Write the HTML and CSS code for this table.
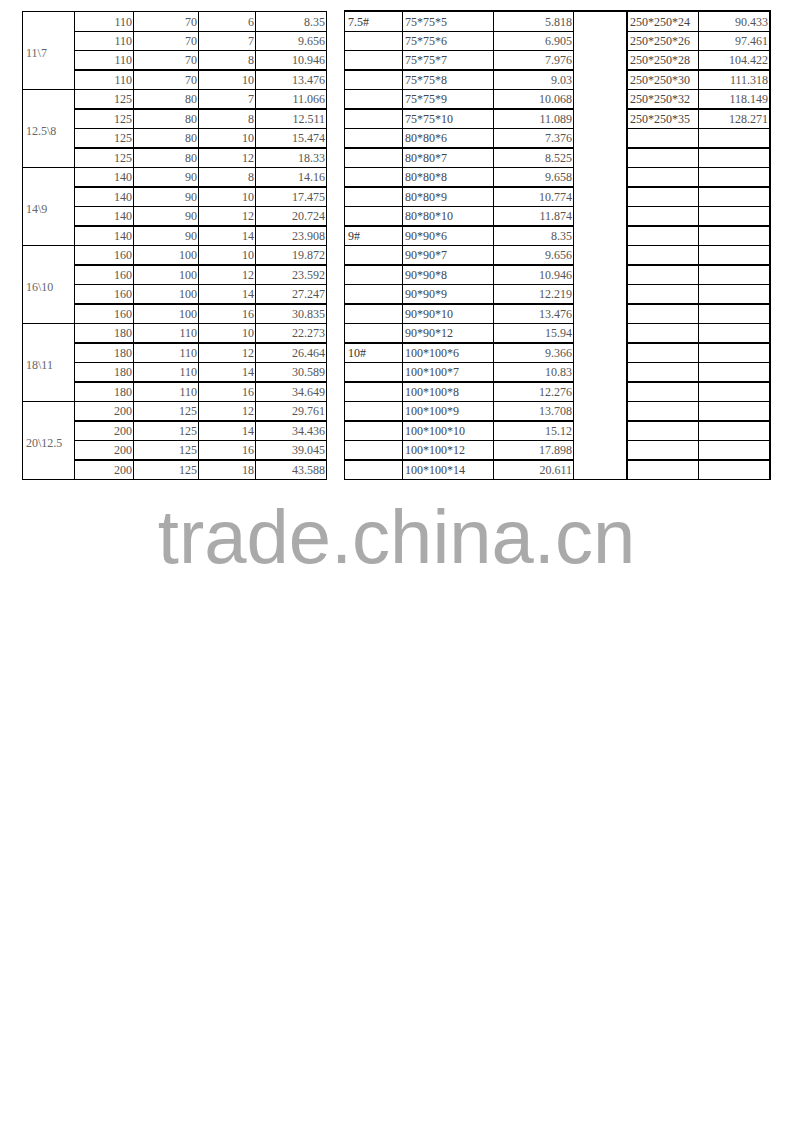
FILE: index.html
```html
<!DOCTYPE html>
<html>
<head>
<meta charset="utf-8">
<link rel="stylesheet" href="styles.css">
</head>
<body>
<div class="sheet">
  <table class="tbl left">
    <colgroup><col class="c1"><col class="c2"><col class="c3"><col class="c4"><col class="c5"></colgroup>
    <tr><td class="grp" rowspan="4">11\7</td><td class="r">110</td><td class="r">70</td><td class="r">6</td><td class="r">8.35</td></tr>
    <tr><td class="r">110</td><td class="r">70</td><td class="r">7</td><td class="r">9.656</td></tr>
    <tr class="thick"><td class="r">110</td><td class="r">70</td><td class="r">8</td><td class="r">10.946</td></tr>
    <tr><td class="r">110</td><td class="r">70</td><td class="r">10</td><td class="r">13.476</td></tr>
    <tr class="thick"><td class="grp" rowspan="4">12.5\8</td><td class="r">125</td><td class="r">80</td><td class="r">7</td><td class="r">11.066</td></tr>
    <tr><td class="r">125</td><td class="r">80</td><td class="r">8</td><td class="r">12.511</td></tr>
    <tr class="thick"><td class="r">125</td><td class="r">80</td><td class="r">10</td><td class="r">15.474</td></tr>
    <tr><td class="r">125</td><td class="r">80</td><td class="r">12</td><td class="r">18.33</td></tr>
    <tr class="thick"><td class="grp" rowspan="4">14\9</td><td class="r">140</td><td class="r">90</td><td class="r">8</td><td class="r">14.16</td></tr>
    <tr><td class="r">140</td><td class="r">90</td><td class="r">10</td><td class="r">17.475</td></tr>
    <tr class="thick"><td class="r">140</td><td class="r">90</td><td class="r">12</td><td class="r">20.724</td></tr>
    <tr><td class="r">140</td><td class="r">90</td><td class="r">14</td><td class="r">23.908</td></tr>
    <tr class="thick"><td class="grp" rowspan="4">16\10</td><td class="r">160</td><td class="r">100</td><td class="r">10</td><td class="r">19.872</td></tr>
    <tr><td class="r">160</td><td class="r">100</td><td class="r">12</td><td class="r">23.592</td></tr>
    <tr class="thick"><td class="r">160</td><td class="r">100</td><td class="r">14</td><td class="r">27.247</td></tr>
    <tr><td class="r">160</td><td class="r">100</td><td class="r">16</td><td class="r">30.835</td></tr>
    <tr class="thick"><td class="grp" rowspan="4">18\11</td><td class="r">180</td><td class="r">110</td><td class="r">10</td><td class="r">22.273</td></tr>
    <tr><td class="r">180</td><td class="r">110</td><td class="r">12</td><td class="r">26.464</td></tr>
    <tr class="thick"><td class="r">180</td><td class="r">110</td><td class="r">14</td><td class="r">30.589</td></tr>
    <tr><td class="r">180</td><td class="r">110</td><td class="r">16</td><td class="r">34.649</td></tr>
    <tr class="thick"><td class="grp" rowspan="4">20\12.5</td><td class="r">200</td><td class="r">125</td><td class="r">12</td><td class="r">29.761</td></tr>
    <tr><td class="r">200</td><td class="r">125</td><td class="r">14</td><td class="r">34.436</td></tr>
    <tr class="thick"><td class="r">200</td><td class="r">125</td><td class="r">16</td><td class="r">39.045</td></tr>
    <tr><td class="r">200</td><td class="r">125</td><td class="r">18</td><td class="r">43.588</td></tr>
  </table>

  <table class="tbl right">
    <colgroup><col class="d1"><col class="d2"><col class="d3"><col class="d4"><col class="d5"><col class="d6"></colgroup>
    <tr><td class="lab">7.5#</td><td class="sz">75*75*5</td><td class="r">5.818</td><td class="gap"></td><td class="sz">250*250*24</td><td class="r">90.433</td></tr>
    <tr><td></td><td class="sz">75*75*6</td><td class="r">6.905</td><td class="gap"></td><td class="sz">250*250*26</td><td class="r">97.461</td></tr>
    <tr class="thick"><td></td><td class="sz">75*75*7</td><td class="r">7.976</td><td class="gap"></td><td class="sz">250*250*28</td><td class="r">104.422</td></tr>
    <tr><td></td><td class="sz">75*75*8</td><td class="r">9.03</td><td class="gap"></td><td class="sz">250*250*30</td><td class="r">111.318</td></tr>
    <tr class="thick"><td></td><td class="sz">75*75*9</td><td class="r">10.068</td><td class="gap"></td><td class="sz">250*250*32</td><td class="r">118.149</td></tr>
    <tr><td></td><td class="sz">75*75*10</td><td class="r">11.089</td><td class="gap"></td><td class="sz">250*250*35</td><td class="r">128.271</td></tr>
    <tr class="thick"><td></td><td class="sz">80*80*6</td><td class="r">7.376</td><td class="gap"></td><td></td><td></td></tr>
    <tr><td></td><td class="sz">80*80*7</td><td class="r">8.525</td><td class="gap"></td><td></td><td></td></tr>
    <tr class="thick"><td></td><td class="sz">80*80*8</td><td class="r">9.658</td><td class="gap"></td><td></td><td></td></tr>
    <tr><td></td><td class="sz">80*80*9</td><td class="r">10.774</td><td class="gap"></td><td></td><td></td></tr>
    <tr class="thick"><td></td><td class="sz">80*80*10</td><td class="r">11.874</td><td class="gap"></td><td></td><td></td></tr>
    <tr><td class="lab">9#</td><td class="sz">90*90*6</td><td class="r">8.35</td><td class="gap"></td><td></td><td></td></tr>
    <tr class="thick"><td></td><td class="sz">90*90*7</td><td class="r">9.656</td><td class="gap"></td><td></td><td></td></tr>
    <tr><td></td><td class="sz">90*90*8</td><td class="r">10.946</td><td class="gap"></td><td></td><td></td></tr>
    <tr class="thick"><td></td><td class="sz">90*90*9</td><td class="r">12.219</td><td class="gap"></td><td></td><td></td></tr>
    <tr><td></td><td class="sz">90*90*10</td><td class="r">13.476</td><td class="gap"></td><td></td><td></td></tr>
    <tr class="thick"><td></td><td class="sz">90*90*12</td><td class="r">15.94</td><td class="gap"></td><td></td><td></td></tr>
    <tr><td class="lab">10#</td><td class="sz">100*100*6</td><td class="r">9.366</td><td class="gap"></td><td></td><td></td></tr>
    <tr class="thick"><td></td><td class="sz">100*100*7</td><td class="r">10.83</td><td class="gap"></td><td></td><td></td></tr>
    <tr><td></td><td class="sz">100*100*8</td><td class="r">12.276</td><td class="gap"></td><td></td><td></td></tr>
    <tr class="thick"><td></td><td class="sz">100*100*9</td><td class="r">13.708</td><td class="gap"></td><td></td><td></td></tr>
    <tr><td></td><td class="sz">100*100*10</td><td class="r">15.12</td><td class="gap"></td><td></td><td></td></tr>
    <tr class="thick"><td></td><td class="sz">100*100*12</td><td class="r">17.898</td><td class="gap"></td><td></td><td></td></tr>
    <tr><td></td><td class="sz">100*100*14</td><td class="r">20.611</td><td class="gap"></td><td></td><td></td></tr>
  </table>
</div>
<div class="wm">trade.china.cn</div>
</body>
</html>
```

FILE: styles.css
```css
html, body {
  margin: 0;
  background: #fff;
}

.sheet {
  display: flex;
  align-items: flex-start;
  gap: 17px;
  padding: 11px 0 0 22px;
}

.tbl {
  border-collapse: separate;
  border-spacing: 0;
  table-layout: fixed;
  border-top: 1px solid #000;
  border-left: 1px solid #000;
}

.tbl td {
  box-sizing: border-box;
  height: 19.5px;
  padding: 1px 1px 0 3px;
  border-right: 1px solid #000;
  border-bottom: 1px solid #000;
  font-family: "Liberation Serif", "DejaVu Serif", serif;
  font-size: 12px;
  line-height: 16px;
  color: #555;
  white-space: nowrap;
  overflow: hidden;
  vertical-align: middle;
}

.tbl tr.thick td {
  border-bottom-width: 2px;
}

.tbl td.r {
  text-align: right;
}

.tbl tr td.grp {
  border-bottom-width: 1px;
  padding-top: 4px;
  color: #666;
}

.left .c1 { width: 52px; }
.left .c2 { width: 59px; }
.left .c3 { width: 65px; }
.left .c4 { width: 57px; }
.left .c5 { width: 71px; }

.right {
  border-top-width: 2px;
  margin-top: -1px;
}

.right .d1 { width: 58px; }
.right .d2 { width: 91px; }
.right .d3 { width: 80px; }
.right .d4 { width: 54px; }
.right .d5 { width: 71px; }
.right .d6 { width: 72px; }

.right td.sz {
  padding-left: 2px;
  color: #444;
}

.right td.lab {
  color: #333;
}

.tbl tr td.gap {
  border-bottom: 0;
  border-right-width: 2px;
}

.tbl tr:last-child td.gap {
  border-bottom: 1px solid #000;
}

.right td:last-child {
  border-right-width: 2px;
}

.wm {
  margin-top: 19px;
  text-align: center;
  font-family: "Liberation Sans", Arial, sans-serif;
  font-size: 76px;
  line-height: 1;
  color: #aaa;
}
```
